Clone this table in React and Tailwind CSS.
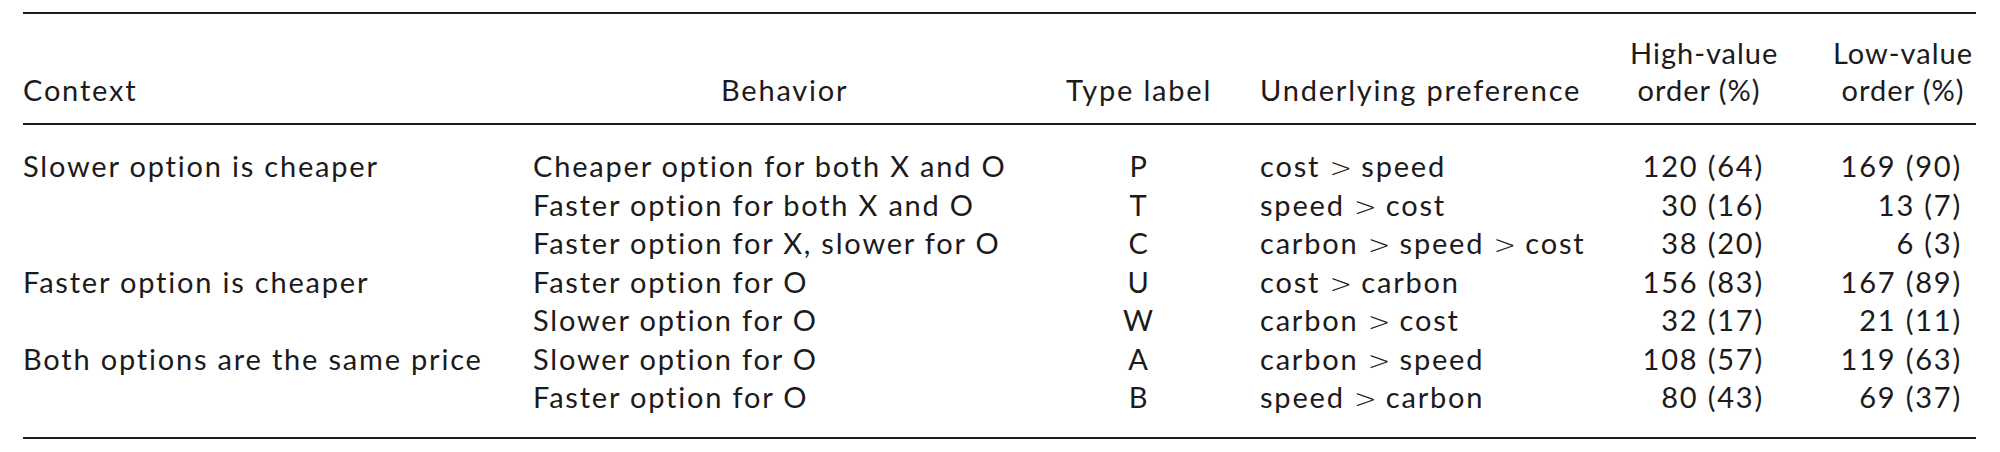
import React from "react";

const Gt = () => (
  <span className="font-['DejaVu_Sans',_sans-serif] text-[27px] leading-[16px] font-light tracking-normal">&gt;</span>
);

function Pref({ parts }) {
  return (
    <>
      {parts.map((p, i) => (
        <React.Fragment key={i}>
          {i > 0 && (
            <>
              {" "}
              <Gt />{" "}
            </>
          )}
          {p}
        </React.Fragment>
      ))}
    </>
  );
}

const rows = [
  ["Slower option is cheaper", "Cheaper option for both X and O", "P", ["cost", "speed"], "120 (64)", "169 (90)"],
  ["", "Faster option for both X and O", "T", ["speed", "cost"], "30 (16)", "13 (7)"],
  ["", "Faster option for X, slower for O", "C", ["carbon", "speed", "cost"], "38 (20)", "6 (3)"],
  ["Faster option is cheaper", "Faster option for O", "U", ["cost", "carbon"], "156 (83)", "167 (89)"],
  ["", "Slower option for O", "W", ["carbon", "cost"], "32 (17)", "21 (11)"],
  ["Both options are the same price", "Slower option for O", "A", ["carbon", "speed"], "108 (57)", "119 (63)"],
  ["", "Faster option for O", "B", ["speed", "carbon"], "80 (43)", "69 (37)"],
];

const grid = "grid grid-cols-[510px_517px_178px_402px_156px_190px]";

export default function App() {
  return (
    <div className="w-[2000px] h-[452px] bg-white text-[#1c1a1b] font-['Lato',_sans-serif] text-[29px] tracking-[1.8px] [font-variant-ligatures:none]">
      <div className="pt-[12px] pl-[23px] w-[1976px]">
        <div className="h-[2px] bg-[#1c1a1b]" />
        <div className={`${grid} items-end pt-[20px] pb-[15px] leading-[37px] whitespace-nowrap`}>
          <div>Context</div>
          <div className="pl-[188px]">Behavior</div>
          <div className="text-center">Type label</div>
          <div className="pl-[32px]">Underlying preference</div>
          <div className="text-center pr-[18px] tracking-[1px]">High-value<br />order (%)</div>
          <div className="text-center pl-[44px] tracking-[1px]">Low-value<br />order (%)</div>
        </div>
        <div className="h-[2px] bg-[#1c1a1b]" />
        <div className="pt-[22px] pb-[20px] leading-[38.5px] whitespace-nowrap">
          {rows.map((r, i) => (
            <div key={i} className={`${grid} h-[38.5px]`}>
              <div>{r[0]}</div>
              <div>{r[1]}</div>
              <div className="text-center">{r[2]}</div>
              <div className="pl-[32px]"><Pref parts={r[3]} /></div>
              <div className="text-right pr-[22px]">{r[4]}</div>
              <div className="text-right pr-[14px]">{r[5]}</div>
            </div>
          ))}
        </div>
        <div className="h-[2px] bg-[#1c1a1b]" />
      </div>
    </div>
  );
}
